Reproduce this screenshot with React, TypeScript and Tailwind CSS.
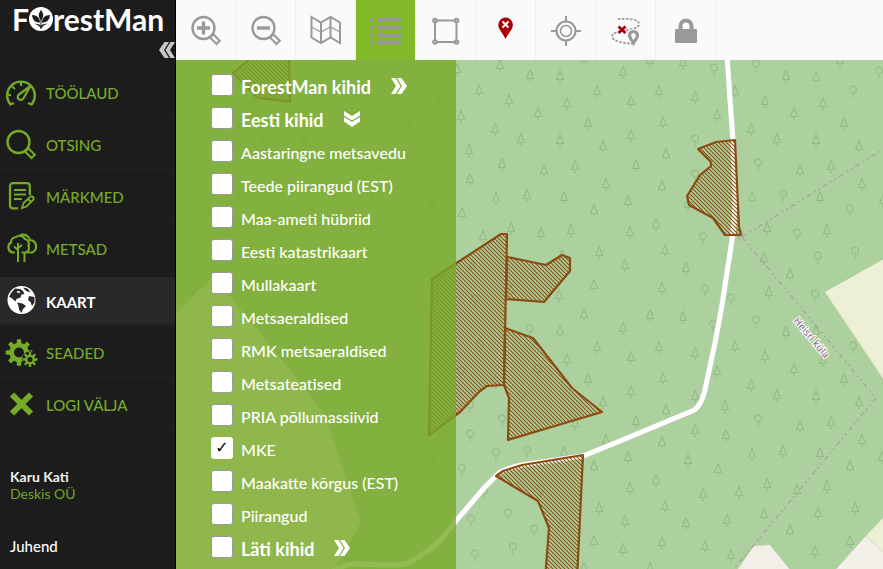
import React, { useState } from "react";

const gearPath = (
  cx: number,
  cy: number,
  outer: number,
  inner: number,
  hole: number,
  teeth: number
) => {
  const step = (Math.PI * 2) / teeth;
  const points: string[] = [];
  for (let i = 0; i < teeth; i++) {
    const a = i * step - Math.PI / 2;
    [
      [inner, -0.3],
      [outer, -0.2],
      [outer, 0.2],
      [inner, 0.3],
    ].forEach(([r, o]) => {
      points.push(
        `${(cx + r * Math.cos(a + o * step)).toFixed(2)} ${(cy + r * Math.sin(a + o * step)).toFixed(2)}`
      );
    });
  }
  return `M${points.join("L")}Z M${cx - hole} ${cy}a${hole} ${hole} 0 1 0 ${hole * 2} 0a${hole} ${hole} 0 1 0 ${-hole * 2} 0Z`;
};

const Icon = ({ children }: { children: React.ReactNode }) => (
  <svg
    viewBox="0 0 30 30"
    className="h-[30px] w-[30px] shrink-0 overflow-visible"
    fill="none"
    stroke="currentColor"
    strokeWidth="2"
    aria-hidden="true"
  >
    {children}
  </svg>
);

const Magnifier = ({ children }: { children?: React.ReactNode }) => (
  <Icon>
    <circle cx="12.5" cy="13" r="11" strokeWidth="2.4" />
    <path d="M19 22.500l3.300-3.300 6.500 6.500-3.300 3.300z" strokeWidth="2" />
    {children}
  </Icon>
);

const GaugeIcon = () => (
  <Icon>
    <path
      d="M8 26l-3.500 1.400A13.800 13.800 0 1 1 25.500 27.400L22 26"
      strokeWidth="2.400"
    />
    <path d="M15 5v4M6 9.500l3 2.500M1.500 18h3.500" />
    <path d="M24.500 9L13 17.500a3 3 0 1 0 4.300 4z" strokeWidth="2.200" />
  </Icon>
);

const NotesIcon = () => (
  <Icon>
    <path
      d="M23.800 14V5a2.800 2.800 0 0 0-2.800-2.800H7A2.800 2.800 0 0 0 4 5v19.500A2.800 2.800 0 0 0 6.800 27.300H12"
      strokeWidth="2.200"
    />
    <path d="M8 9h12M8 13.500h12M8 18h8" />
    <path
      d="M16 27l1.500-5 6.500-6a2 2 0 0 1 3 3l-6.500 6.500zM22 18l3 3"
      strokeWidth="1.8"
    />
  </Icon>
);

const TreesIcon = () => (
  <Icon>
    <path
      d="M9 19.500H6.500a5.500 5.500 0 0 1-1.500-10A5.500 5.500 0 0 1 10 4a6 6 0 0 1 9 2 5 5 0 0 1 3.500 7 4.500 4.500 0 0 1-3.500 6.500h-3.500"
      strokeWidth="2.2"
    />
    <path d="M14 2.500a7 7 0 0 1 10 4.500 6.500 6.500 0 0 1 2 12.500H21" strokeWidth="2.2" />
    <path d="M12 29V10M12 17l-4-3.500M12 15l4-3M18.500 29V20" />
  </Icon>
);

const GlobeIcon = () => (
  <Icon>
    <circle cx="15.500" cy="15" r="14" fill="currentColor" stroke="none" />
    <path
      d="M5 8l4-4.500 5 .5 3 2 1.500 3-3 .5-1 3-4 1.500-1 2.500-4-3.500-2.500-1zM11 17.500l5.500 1 3.500 2.500-3 3-1.500 4-2.500-3.500-.5-3.500zM17 2.500l4.500 1 3 3.500-3-.5-2-1zM23 11l5.500 1v5.500l-2.500 3.500-1.500-4-2.500-2z"
      fill="#292929"
      stroke="none"
    />
    <path d="M11 6.500l3 1M20 8l3 1" stroke="#fff" strokeWidth="1.500" />
  </Icon>
);

const GearsIcon = () => (
  <Icon>
    <g fill="currentColor" fillRule="evenodd" stroke="none">
      <path d={gearPath(13, 15.5, 13.5, 9.8, 5, 8)} />
      <circle cx="24" cy="22.500" r="8" fill="#1c1c1c" />
      <path d={gearPath(24, 22.5, 7.5, 5, 2.5, 8)} />
    </g>
  </Icon>
);

const CloseIcon = () => (
  <Icon>
    <path d="M6 5.500l19 19M25 5.500l-19 19" strokeWidth="6" />
  </Icon>
);

const menu = [
  { name: "TÖÖLAUD", icon: <GaugeIcon /> },
  { name: "OTSING", icon: <Magnifier /> },
  { name: "MÄRKMED", icon: <NotesIcon /> },
  { name: "METSAD", icon: <TreesIcon /> },
  { name: "KAART", icon: <GlobeIcon />, active: true },
  { name: "SEADED", icon: <GearsIcon /> },
  { name: "LOGI VÄLJA", icon: <CloseIcon /> },
];

const tools = [
  {
    name: "Suurenda",
    icon: (
      <Magnifier>
        <path d="M12.500 6.500v13M6 13h13" strokeWidth="3.400" />
      </Magnifier>
    ),
  },
  {
    name: "Vähenda",
    icon: (
      <Magnifier>
        <path d="M6 13h13" strokeWidth="3.400" />
      </Magnifier>
    ),
  },
  {
    name: "Aluskaart",
    icon: (
      <Icon>
        <path d="M.500 2l9.500 5.500 9.500-5.500 9.500 5.500v20.500l-9.500-5.500-9.500 5.500-9.500-5.500z" />
        <path d="M10 7v21M19.500 2v21" />
        <path d="M.500 12l9.500 5 9.500-5 9.500 5" strokeWidth="1.200" />
      </Icon>
    ),
  },
  {
    name: "Kihid",
    active: true,
    icon: (
      <Icon>
        <path d="M6 5h24M6 12.500h24M6 20h24M6 27.500h24" strokeWidth="4" />
        <g fill="currentColor" stroke="none">
          <circle cx="1" cy="5" r="2" />
          <circle cx="1" cy="12.500" r="2" />
          <circle cx="1" cy="20" r="2" />
          <circle cx="1" cy="27.500" r="2" />
        </g>
      </Icon>
    ),
  },
  {
    name: "Mõõda ala",
    icon: (
      <Icon>
        <path d="M4 5.500h21.500v21.500H4z" />
        <g fill="#ccc">
          <circle cx="4" cy="5.500" r="1.800" />
          <circle cx="25.500" cy="5.500" r="1.800" />
          <circle cx="4" cy="27" r="1.800" />
          <circle cx="25.500" cy="27" r="1.800" />
        </g>
      </Icon>
    ),
  },
  {
    name: "Eemalda punkt",
    icon: (
      <Icon>
        <path
          d="M14.500 24C12 18.500 7.300 14.500 7.300 9.800a7.300 7.300 0 0 1 14.600 0C21.900 14.500 17 18.500 14.500 24z"
          fill="#a80008"
          stroke="none"
        />
        <path d="M11.500 6.500l6 6M17.500 6.500l-6 6" stroke="#fff" />
      </Icon>
    ),
  },
  {
    name: "Minu asukoht",
    icon: (
      <Icon>
        <circle cx="15" cy="16" r="9.500" strokeWidth="2.200" />
        <circle cx="15" cy="16" r="5.500" strokeWidth="1.500" />
        <path d="M15 1v6M15 25v6M0 16h6M24 16h6" />
      </Icon>
    ),
  },
  {
    name: "Eemalda teekond",
    icon: (
      <Icon>
        <path
          d="M7 4c8-.5 21-.5 21 5 0 4-7 5-13 6.500S1 17 1 21.500 13 28.500 21 28.500"
          strokeWidth="1.800"
          strokeDasharray="2.500 1.500"
        />
        <circle cx="22.500" cy="21" r="7" fill="#fafafa" stroke="none" />
        <path
          d="M22.500 28c-1.500-3-4-4.500-4-7.500a4 4 0 0 1 8 0c0 3-2.500 4.500-4 7.500z"
          strokeWidth="3.200"
        />
        <path d="M7.500 11.500l7 6.500M14.500 11.500l-7 6.500" stroke="#a80008" strokeWidth="2.800" />
      </Icon>
    ),
  },
  {
    name: "Lukusta",
    icon: (
      <Icon>
        <rect x="4" y="14" width="22" height="14" rx="1" fill="currentColor" stroke="none" />
        <path d="M9.500 15v-4a5.500 5.500 0 0 1 11 0v4" strokeWidth="4" />
      </Icon>
    ),
  },
];

const layers = [
  { name: "ForestMan kihid", group: "closed" },
  { name: "Eesti kihid", group: "open" },
  { name: "Aastaringne metsavedu" },
  { name: "Teede piirangud (EST)" },
  { name: "Maa-ameti hübriid" },
  { name: "Eesti katastrikaart" },
  { name: "Mullakaart" },
  { name: "Metsaeraldised" },
  { name: "RMK metsaeraldised" },
  { name: "Metsateatised" },
  { name: "PRIA põllumassiivid" },
  { name: "MKE" },
  { name: "Maakatte kõrgus (EST)" },
  { name: "Piirangud" },
  { name: "Läti kihid", group: "closed" },
];

// map symbols, x y pairs
const pines =
  "457,69 500,65 530,75 560,76 479,90 509,100 538,113 567,103 597,91 623,72 631,101 659,91 584,58 650,60 683,62 695,97 461,116 495,129 521,139 560,140 588,123 663,122 631,135 603,146 666,154 469,150 502,164 544,170 575,166 636,165 470,179 606,184 662,186 496,198 527,195 564,197 628,201 594,210 462,213 656,224 511,228 483,236 541,233 571,230 630,232 665,250 599,252 625,265 686,268 688,204 786,76 816,77 735,91 765,101 823,103 717,115 794,113 844,123 751,129 777,139 816,140 859,146 800,170 831,166 862,184 752,197 820,197 767,228 827,230 764,258 662,288 790,274 769,292 883,200 840,60 650,315 683,317 623,328 659,347 631,357 695,353 735,346 765,356 786,332 816,331 823,360 794,369 717,371 663,378 751,385 844,379 631,391 695,396 777,395 816,396 859,402 666,410 725,406 636,421 800,426 831,422 695,430 726,435 862,440 662,442 628,457 688,460 752,454 783,451 820,453 718,469 850,466 882,457 656,480 630,488 767,484 797,490 827,486 703,494 739,492 665,506 764,514 818,513 855,508 727,520 686,523 625,521 790,530 662,542 705,546 731,555 850,541 815,551 623,549 650,568 594,285 559,295 584,314 560,331 597,347 567,359 588,379 603,402 575,423 606,440 564,452 594,466 599,508 594,541 584,568 447,238 562,255 511,290 534,275 472,265 329,62 239,130 265,139 304,140 304,77 367,72 439,73 312,103 375,102 439,103 253,100 332,123 407,123 375,133 439,141 347,147 410,153 246,167 288,170 380,165 372,200 406,185 432,204 400,225 409,249 367,550";

const leafTrees =
  "695,140 695,175 714,69 756,65 879,72 853,91 758,164 783,195 850,210 797,234 703,238 739,235 855,252 818,257 705,290 731,299 815,295 756,321 713,325 853,347 758,420 530,330 502,420 470,406 470,435 496,454 527,451 462,469 484,492 508,514 471,520 534,530 513,548 475,555 430,268 427,317 439,431 432,459 447,494 430,523 449,545 475,300 480,345 461,372 496,382 522,395 538,370 541,490 563,525 201,68 183,96 205,114 183,140 240,197 183,186 206,213 271,195 308,197 319,166 338,209 227,235 191,237 285,233 374,231 215,265 278,273 193,290 338,285 369,264 303,295 367,293 406,286 394,314 367,327 328,313 274,331 304,332 340,250 403,346 341,347 332,378 407,377 375,391 347,401 410,409 311,362 380,420 350,440 406,442 372,457 432,460 400,479 409,506 369,521 406,543";

const toPoints = (list: string) =>
  list.split(" ").map((pair) => pair.split(",").map(Number));

const parcels = [
  "233,73 251,58 289,58 290,102 258,98",
  "432,279 501,234 507,234 504,385 487,386 480,391 460,412 429,435",
  "507,257 546,265 562,255 570,258 570,271 544,302 506,299",
  "505,328 533,338 572,388 602,412 508,440 509,398 504,385",
  "496,476 503,471 522,465 583,455 577,580 545,580 549,528 538,501",
  "735,140 716,142 698,149 711,162 711,166 700,175 687,196 689,205 713,218 725,235 741,235 739,227",
];

const road =
  "M727 55L730 100L733 140L735 190Q735 220 732 240L722 305L715 343L706 385Q702 407 692 411L620 441L593 452L583 456L522 465Q500 470 496 476L485 487L456 521L440 541Q428 551 414 560Q405 566 389 565L356 564Q345 564 330 572";

const ForestMap = () => (
  <svg className="absolute inset-0 h-full w-full bg-[#add19e]" aria-label="Kaart">
    <defs>
      <pattern id="hatch" width="4" height="4" patternUnits="userSpaceOnUse">
        <path d="M-1 -1L5 5M3 -1L5 1M-1 3L1 5" stroke="#8b4c12" strokeWidth="1.1" />
      </pattern>
      <g id="pine" fill="none" stroke="#94bb86" strokeWidth="1.1">
        <path d="M0 -5.500L3.500 3.500H-3.500ZM0 3.500V7" />
      </g>
      <g id="leaf" fill="none" stroke="#94bb86" strokeWidth="1.1">
        <circle cx="0" cy="-1.500" r="3.400" />
        <path d="M0 2V7" />
      </g>
    </defs>
    <g transform="translate(-176 -60)">
      <path d="M176 313L218 272L229 295L306 390L326 417L361 522L339 562L334 569H176Z" fill="#eef0d5" />
      <path d="M825 292L900 250V404Z" fill="#eef0d5" />
      <path d="M900 500L866 536L900 568Z" fill="#eef0d5" />
      <path d="M866 536L830 576H900V568Z" fill="#f2efe9" stroke="#dcdccb" />
      <path d="M733 576L754 546L770 545L795 576Z" fill="#f2efe9" />
      <path
        d="M712 70Q690 140 690 210T685 362L720 395Q740 420 790 427T883 432M535 312Q555 330 558 370V452"
        fill="none"
        stroke="#b1d3a1"
      />
      {toPoints(pines).map(([x, y]) => (
        <use key={`${x}-${y}`} href="#pine" x={x} y={y} />
      ))}
      {toPoints(leafTrees).map(([x, y]) => (
        <use key={`${x}-${y}`} href="#leaf" x={x} y={y} />
      ))}
      <path
        d="M742 237L900 139M742 237L876 398L728 576"
        fill="none"
        stroke="#ab95a6"
        strokeWidth="1.1"
        strokeDasharray="5 4 2 3 2 3"
      />
      <path d={road} fill="none" stroke="#c3c9bd" strokeWidth="6" />
      <path d={road} fill="none" stroke="#fff" strokeWidth="5" />
      {parcels.map((points) => (
        <polygon
          key={points}
          points={points}
          fill="url(#hatch)"
          stroke="#8b4c12"
          strokeWidth="2.2"
          strokeLinejoin="round"
        />
      ))}
      <text
        transform="translate(793 321) rotate(50)"
        className="fill-[#7d5c80] stroke-white stroke-[2px] font-['Noto_Sans',sans-serif] text-[10px] [paint-order:stroke]"
      >
        Heisri küla
      </text>
    </g>
  </svg>
);

const Chevrons = ({ open }: { open?: boolean }) => (
  <svg
    viewBox="0 0 16 16"
    className={open ? "h-4 w-4 rotate-90" : "h-4 w-4"}
    fill="currentColor"
    aria-hidden="true"
  >
    <path d="M0 0h4.500l5 8-5 8H0l5-8zM6 0h4.500l5.500 8-5.500 8H6l5-8z" />
  </svg>
);

const Sidebar = () => (
  <aside className="flex w-44 shrink-0 flex-col border-r border-black bg-[#1c1c1c]">
    <a
      href="#"
      aria-label="ForestMan"
      className="flex h-[38px] items-center pl-3 text-[30px] font-bold leading-9 text-white"
    >
      F
      <svg viewBox="0 0 24 24" className="h-6 w-6" aria-hidden="true">
        <circle cx="12" cy="12" r="12" fill="#fff" />
        <g fill="#1c1c1c">
          <path d="M12 3c3 3.500 3 7 0 10.500C9 10 9 6.500 12 3z" />
          <path d="M3 8c5 0 8 3 8 7.500C6 15.500 3.500 13 3 8zM21 8c-5 0-8 3-8 7.500 5 0 7.500-2.500 8-7.500z" />
          <path d="M5.500 17c3-.5 5 .3 6.500 2 1.500-1.700 3.500-2.500 6.500-2-3 .5-5 2-6 4.500h-1c-1-2.500-3-4-6-4.500z" />
          <path d="M11.500 12h1v9h-1z" />
        </g>
      </svg>
      restMan
    </a>
    <div className="flex h-7 justify-end">
      <button type="button" aria-label="Peida menüü" className="mt-1 h-4 w-4 rotate-180 text-[#c8c8c8]">
        <Chevrons />
      </button>
    </div>
    <nav>
      {menu.map((item) => (
        <a
          key={item.name}
          href="#"
          className={
            item.active
              ? "flex h-[52px] items-center gap-2.5 border-y-[3px] border-t-[#1c1c1c] border-b-[#222] bg-[#292929] pl-1.5 text-[15px] font-bold text-white"
              : "flex h-[52px] items-center gap-2.5 border-b border-[#222] pl-1.5 text-[15px] font-medium text-[#76ab27]"
          }
        >
          {item.icon}
          <span className="pt-1">{item.name}</span>
        </a>
      ))}
    </nav>
    <div className="mt-9 px-2.5 pt-0.5 text-sm leading-[17px]">
      <p className="font-bold text-[#eee]">Karu Kati</p>
      <p className="text-[#6fa626]">Deskis OÜ</p>
      <a href="#" className="mt-9 block text-[15px] font-medium text-white">
        Juhend
      </a>
    </div>
  </aside>
);

const LayerPanel = () => {
  const [selected, setSelected] = useState<string[]>(["MKE"]);

  const toggle = (name: string) =>
    setSelected((prev) =>
      prev.includes(name) ? prev.filter((n) => n !== name) : [...prev, name]
    );

  return (
    <ul className="relative min-h-full w-[280px] bg-[rgba(120,169,40,0.8)] pt-2 pl-[35px] text-white">
      {layers.map((layer) => (
        <li key={layer.name} className="flex h-[33px] items-center gap-5">
          <label className="flex items-center gap-2">
            <input
              type="checkbox"
              checked={selected.includes(layer.name)}
              onChange={() => toggle(layer.name)}
              className="grid h-[22px] w-[22px] shrink-0 appearance-none place-items-center rounded-[3px] border border-[#9a9a9a] bg-white font-['DejaVu_Sans',sans-serif] text-base leading-4 text-black checked:border-white checked:before:content-['✓']"
            />
            <span
              className={
                layer.group ? "pt-1 text-lg leading-6 font-bold" : "pt-1 text-base leading-6 font-medium"
              }
            >
              {layer.name}
            </span>
          </label>
          {layer.group && (
            <button type="button" aria-label={`Ava ${layer.name}`} className="pt-0.5">
              <Chevrons open={layer.group === "open"} />
            </button>
          )}
        </li>
      ))}
    </ul>
  );
};

const App = () => {
  return (
    <div className="flex min-h-screen font-[Lato,sans-serif]">
      <Sidebar />
      <main className="flex min-w-0 flex-1 flex-col">
        <div className="flex h-[60px] overflow-hidden bg-[#fafafa]">
          {tools.map((tool) => (
            <button
              key={tool.name}
              type="button"
              aria-label={tool.name}
              className={
                tool.active
                  ? "flex w-[60px] shrink-0 items-center justify-center border-r border-[#f0f0f0] bg-[#83b829] text-[#999]"
                  : "flex w-[60px] shrink-0 items-center justify-center border-r border-[#f0f0f0] text-[#999]"
              }
            >
              {tool.icon}
            </button>
          ))}
        </div>
        <div className="relative flex flex-1 overflow-hidden">
          <ForestMap />
          <LayerPanel />
        </div>
      </main>
    </div>
  );
};

export default App;
